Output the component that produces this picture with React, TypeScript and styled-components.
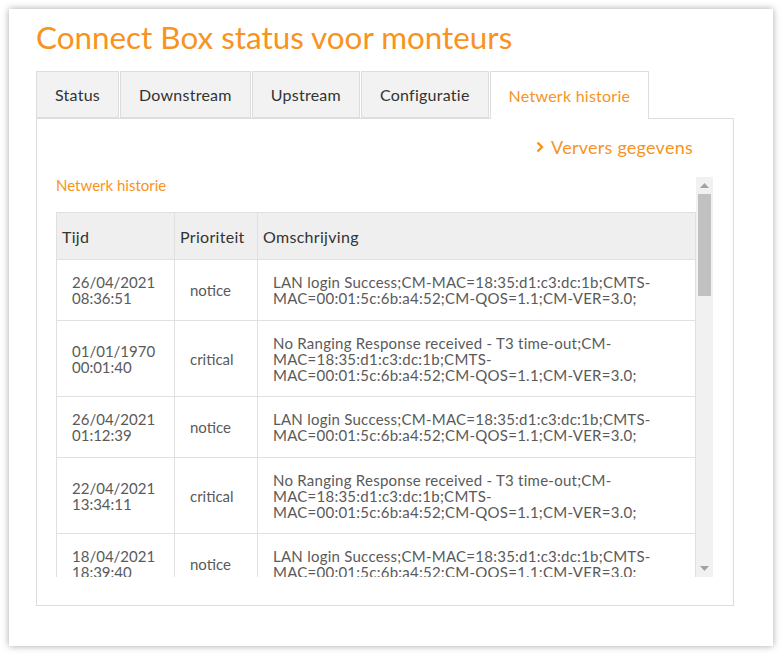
import React from 'react';
import styled, { createGlobalStyle } from 'styled-components';

const GlobalStyle = createGlobalStyle`
  html, body {
    margin: 0;
    padding: 0;
    background: #ffffff;
  }
  body {
    font-family: 'Lato', 'Open Sans', sans-serif;
  }
`;

const ORANGE = '#f7931e';

const Card = styled.div`
  margin: 9px;
  height: 637px;
  box-sizing: border-box;
  background: #ffffff;
  box-shadow: 0 0 7px rgba(0, 0, 0, 0.35);
  padding: 9px 0 0 27px;
`;

const Title = styled.h1`
  margin: 0 0 15px;
  font-size: 31.4px;
  font-weight: 400;
  line-height: 38px;
  color: ${ORANGE};
`;

const TabBar = styled.div`
  display: flex;
  gap: 1px;
  height: 47px;
  position: relative;
  z-index: 1;
`;

const Tab = styled.div<{ $active?: boolean }>`
  display: flex;
  align-items: center;
  padding: 0 18px;
  box-sizing: border-box;
  height: ${(p) => (p.$active ? '48px' : '47px')};
  border: 1px solid #dddddd;
  border-bottom: ${(p) => (p.$active ? 'none' : '1px solid #dddddd')};
  background: ${(p) => (p.$active ? '#ffffff' : '#f2f2f2')};
  color: ${(p) => (p.$active ? ORANGE : '#333333')};
  font-size: 16px;
  letter-spacing: 0.25px;
`;

const Panel = styled.div`
  width: 698px;
  height: 488px;
  box-sizing: border-box;
  border: 1px solid #dddddd;
  padding: 17px 20px 0 19px;
  display: flex;
  flex-direction: column;
`;

const RefreshRow = styled.div`
  display: flex;
  justify-content: flex-end;
  padding-right: 20px;
  height: 22px;
  margin-bottom: 19px;
`;

const RefreshLink = styled.a`
  display: flex;
  align-items: center;
  gap: 7px;
  color: ${ORANGE};
  font-size: 18px;
  letter-spacing: 0.25px;
  text-decoration: none;
`;

const ScrollBox = styled.div`
  display: flex;
  height: 400px;
`;

const ScrollContent = styled.div`
  flex: 1;
  min-width: 0;
  overflow: hidden;
`;

const ScrollTrack = styled.div`
  width: 17px;
  flex: none;
  background: #f1f1f1;
  display: flex;
  flex-direction: column;
`;

const ScrollArrow = styled.div`
  height: 17px;
  display: flex;
  align-items: center;
  justify-content: center;
  flex: none;
`;

const ScrollRail = styled.div`
  flex: 1;
  padding: 0 2px;
`;

const ScrollThumb = styled.div`
  height: 102px;
  background: #c1c1c1;
`;

const SectionLabel = styled.div`
  color: ${ORANGE};
  font-size: 15px;
  line-height: 17px;
  margin-bottom: 18px;
`;

const Table = styled.table`
  width: 100%;
  border-collapse: collapse;
  table-layout: fixed;
`;

const HeadCell = styled.th<{ $width?: number }>`
  width: ${(p) => (p.$width ? `${p.$width}px` : 'auto')};
  height: 47px;
  box-sizing: border-box;
  background: #efefef;
  border: 1px solid #e0e0e0;
  padding: 0 5px;
  text-align: left;
  font-weight: 400;
  font-size: 16px;
  letter-spacing: 0.3px;
  color: #333333;
`;

const Cell = styled.td<{ $text?: boolean }>`
  border: 1px solid #e0e0e0;
  padding: 14px 15px 13.5px;
  font-size: 15px;
  line-height: 16px;
  letter-spacing: ${(p) => (p.$text ? '0.25px' : '0')};
  color: #5a5a5a;
  vertical-align: middle;
  word-wrap: break-word;
`;

const Chevron = () => (
  <svg width="8" height="12" viewBox="0 0 8 12">
    <path d="M1.5 1.5 L6 6 L1.5 10.5" fill="none" stroke={ORANGE} strokeWidth="2.4" />
  </svg>
);

const Arrow = ({ down }: { down?: boolean }) => (
  <svg width="9" height="5" viewBox="0 0 9 5">
    <path d={down ? 'M0 0 H9 L4.5 5 Z' : 'M0 5 H9 L4.5 0 Z'} fill="#a3a3a3" />
  </svg>
);

const LOGIN = 'LAN login Success;CM-MAC=18:35:d1:c3:dc:1b;CMTS-MAC=00:01:5c:6b:a4:52;CM-QOS=1.1;CM-VER=3.0;';
const RANGING =
  'No Ranging Response received - T3 time-out;CM-MAC=18:35:d1:c3:dc:1b;CMTS-MAC=00:01:5c:6b:a4:52;CM-QOS=1.1;CM-VER=3.0;';

const rows = [
  ['26/04/2021 08:36:51', 'notice', LOGIN],
  ['01/01/1970 00:01:40', 'critical', RANGING],
  ['26/04/2021 01:12:39', 'notice', LOGIN],
  ['22/04/2021 13:34:11', 'critical', RANGING],
  ['18/04/2021 18:39:40', 'notice', LOGIN],
  ['01/01/1970 00:01:38', 'critical', RANGING],
  ['18/04/2021 02:10:05', 'notice', LOGIN],
];

const tabs = ['Status', 'Downstream', 'Upstream', 'Configuratie', 'Netwerk historie'];

export default function App() {
  return (
    <>
      <GlobalStyle />
      <Card>
        <Title>Connect Box status voor monteurs</Title>
        <TabBar>
          {tabs.map((t) => (
            <Tab key={t} $active={t === 'Netwerk historie'}>
              {t}
            </Tab>
          ))}
        </TabBar>
        <Panel>
          <RefreshRow>
            <RefreshLink href="#">
              <Chevron />
              Ververs gegevens
            </RefreshLink>
          </RefreshRow>
          <ScrollBox>
            <ScrollContent>
              <SectionLabel>Netwerk historie</SectionLabel>
              <Table>
                <thead>
                  <tr>
                    <HeadCell $width={118}>Tijd</HeadCell>
                    <HeadCell $width={83}>Prioriteit</HeadCell>
                    <HeadCell>Omschrijving</HeadCell>
                  </tr>
                </thead>
                <tbody>
                  {rows.map(([time, prio, desc], i) => (
                    <tr key={i}>
                      <Cell>{time}</Cell>
                      <Cell>{prio}</Cell>
                      <Cell $text>{desc}</Cell>
                    </tr>
                  ))}
                </tbody>
              </Table>
            </ScrollContent>
            <ScrollTrack>
              <ScrollArrow>
                <Arrow />
              </ScrollArrow>
              <ScrollRail>
                <ScrollThumb />
              </ScrollRail>
              <ScrollArrow>
                <Arrow down />
              </ScrollArrow>
            </ScrollTrack>
          </ScrollBox>
        </Panel>
      </Card>
    </>
  );
}
